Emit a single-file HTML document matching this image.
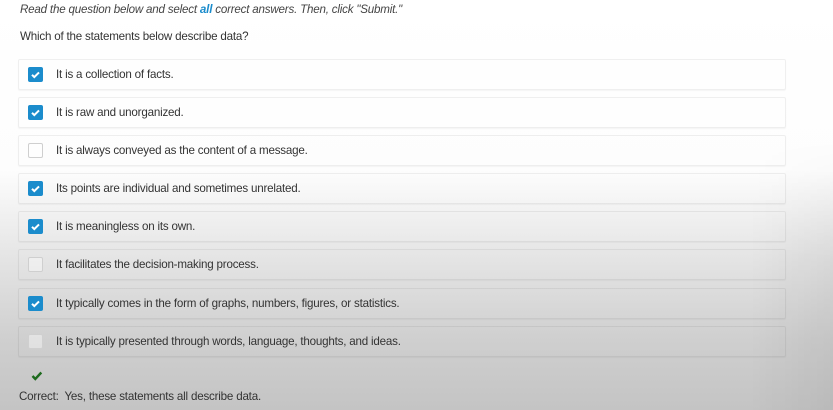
<!DOCTYPE html>
<html><head><style>
html,body{margin:0;padding:0;width:833px;height:410px;overflow:hidden}
body{font-family:"Liberation Sans",sans-serif;color:#333;position:relative;
background:linear-gradient(to bottom,#fff 0,#fdfdfd 170px,#e4e4e4 260px,#cfcfcf 340px,#c4c4c4 410px);}
.vig{position:absolute;left:0;top:0;width:833px;height:410px;background:linear-gradient(to right,rgba(0,0,0,0) 0,rgba(0,0,0,0) 90%,rgba(0,0,0,0.05) 100%);-webkit-mask-image:linear-gradient(to bottom,transparent 0,transparent 140px,#000 260px);mask-image:linear-gradient(to bottom,transparent 0,transparent 140px,#000 260px)}
.t{position:absolute;white-space:nowrap;font-size:11.6px;letter-spacing:-0.2px}
.row{position:absolute;left:18px;width:766px;height:29px;border:1px solid rgba(0,0,0,0.06);border-radius:2px;box-shadow:0 1px 1px rgba(0,0,0,0.04)}
.cb{position:absolute;left:9px;top:7px;width:15px;height:15px;border-radius:2px;box-sizing:border-box}
.on{background:#1b8ccc}
.off{border:1px solid #cfcfcf;background:rgba(255,255,255,0.4)}
.row .lbl{position:absolute;left:37px;top:8px;font-size:11.6px;letter-spacing:-0.2px;color:#333;white-space:nowrap}
</style></head><body>
<div class="vig"></div>
<div class="t" style="left:20px;top:3px;font-style:italic;color:#444">Read the question below and select <b style="color:#1b8ccc">all</b> correct answers. Then, click "Submit."</div>
<div class="t" style="left:20px;top:30px;color:#333">Which of the statements below describe data?</div>

<div class="row" style="top:59px"><div class="cb on"><svg width="15" height="15"><path d="M4 7.8l2.3 2.3 4.7-4.7" stroke="#fff" stroke-width="2" fill="none"/></svg></div><div class="lbl">It is a collection of facts.</div></div>
<div class="row" style="top:97px"><div class="cb on"><svg width="15" height="15"><path d="M4 7.8l2.3 2.3 4.7-4.7" stroke="#fff" stroke-width="2" fill="none"/></svg></div><div class="lbl">It is raw and unorganized.</div></div>
<div class="row" style="top:135px"><div class="cb off"></div><div class="lbl">It is always conveyed as the content of a message.</div></div>
<div class="row" style="top:173px"><div class="cb on"><svg width="15" height="15"><path d="M4 7.8l2.3 2.3 4.7-4.7" stroke="#fff" stroke-width="2" fill="none"/></svg></div><div class="lbl">Its points are individual and sometimes unrelated.</div></div>
<div class="row" style="top:211px"><div class="cb on"><svg width="15" height="15"><path d="M4 7.8l2.3 2.3 4.7-4.7" stroke="#fff" stroke-width="2" fill="none"/></svg></div><div class="lbl">It is meaningless on its own.</div></div>
<div class="row" style="top:249px"><div class="cb off"></div><div class="lbl">It facilitates the decision-making process.</div></div>
<div class="row" style="top:288px"><div class="cb on"><svg width="15" height="15"><path d="M4 7.8l2.3 2.3 4.7-4.7" stroke="#fff" stroke-width="2" fill="none"/></svg></div><div class="lbl">It typically comes in the form of graphs, numbers, figures, or statistics.</div></div>
<div class="row" style="top:326px"><div class="cb off"></div><div class="lbl">It is typically presented through words, language, thoughts, and ideas.</div></div>

<svg style="position:absolute;left:31px;top:371px" width="12" height="10"><path d="M1.5 5l2.8 3 6-6.5" stroke="#1e6b1e" stroke-width="2.4" fill="none"/></svg>
<div class="t" style="left:19px;top:390px;color:#333">Correct:&nbsp; Yes, these statements all describe data.</div>
</body></html>
